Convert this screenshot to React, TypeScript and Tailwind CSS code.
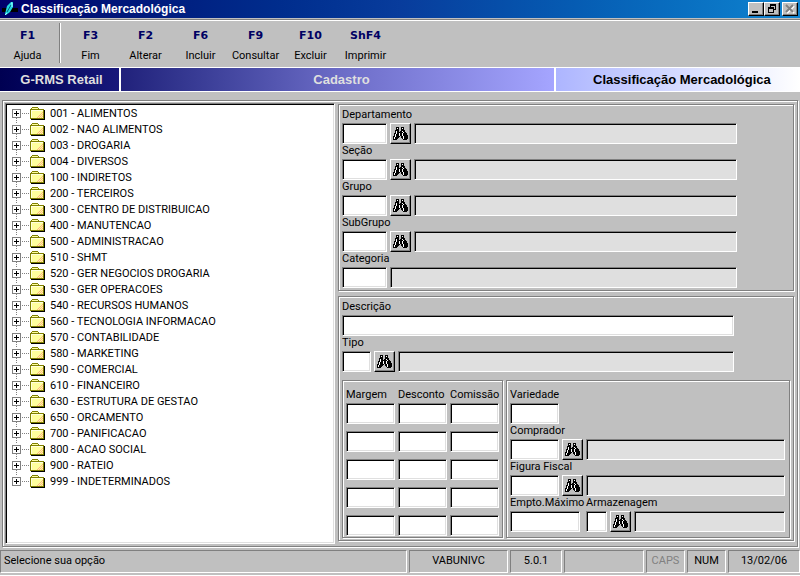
import { useId } from "react";
import type { ReactNode } from "react";
import clsx from "clsx";

const departments = [
  "001 - ALIMENTOS",
  "002 - NAO ALIMENTOS",
  "003 - DROGARIA",
  "004 - DIVERSOS",
  "100 - INDIRETOS",
  "200 - TERCEIROS",
  "300 - CENTRO DE DISTRIBUICAO",
  "400 - MANUTENCAO",
  "500 - ADMINISTRACAO",
  "510 - SHMT",
  "520 - GER NEGOCIOS DROGARIA",
  "530 - GER OPERACOES",
  "540 - RECURSOS HUMANOS",
  "560 - TECNOLOGIA INFORMACAO",
  "570 - CONTABILIDADE",
  "580 - MARKETING",
  "590 - COMERCIAL",
  "610 - FINANCEIRO",
  "630 - ESTRUTURA DE GESTAO",
  "650 - ORCAMENTO",
  "700 - PANIFICACAO",
  "800 - ACAO SOCIAL",
  "900 - RATEIO",
  "999 - INDETERMINADOS",
];

const actions = [
  { key: "F3", label: "Fim" },
  { key: "F2", label: "Alterar" },
  { key: "F6", label: "Incluir" },
  { key: "F9", label: "Consultar" },
  { key: "F10", label: "Excluir" },
  { key: "ShF4", label: "Imprimir" },
];

const etched =
  "border border-[#808080] shadow-[1px_1px_0_#fff,inset_1px_1px_0_#fff]";
const sunken =
  "border border-t-[#808080] border-l-[#808080] border-r-white border-b-white shadow-[inset_1px_1px_0_#000,inset_-1px_-1px_0_#dfdfdf]";
const raised =
  "border border-t-white border-l-white border-r-black border-b-black bg-[#c0c0c0] shadow-[inset_-1px_-1px_0_#808080]";

// # = black, o = white
const binoculars = [
  "...###..###....",
  "...#o#..#o#....",
  "...###..###....",
  "..####..####...",
  "..#o##.##o##...",
  "..#o######o##..",
  ".##o##o##o####.",
  ".#o###o##o####.",
  ".#o###o##o#####",
  "##o####.##o####",
  "#o####..##o####",
  "#o###....#o####",
  "####......####.",
];

function Pixels({ rows }: { rows: string[] }) {
  return (
    <svg
      width={rows[0].length}
      height={rows.length}
      shapeRendering="crispEdges"
      aria-hidden="true"
    >
      {rows.map((row, y) =>
        row.split("").map((c, x) =>
          c === "." ? null : (
            <rect
              key={`${x}-${y}`}
              x={x}
              y={y}
              width="1"
              height="1"
              fill={c === "#" ? "#000" : "#fff"}
            />
          )
        )
      )}
    </svg>
  );
}

function Folder() {
  return (
    <svg width="16" height="14" shapeRendering="crispEdges" aria-hidden="true">
      <path d="M1 12h13v-9h1v10h-14z" fill="#000" />
      <path d="M0 2h1v-1h1v-1h6v1h1v1h5v10h-14z" fill="#808000" />
      <path d="M1 3h12v8h-12zM2 1h6v1h-6z" fill="#ffff9c" />
      <path d="M1 3h12v1h-12zM1 3h1v8h-1z" fill="#ffffde" />
      <path
        d="M12 5h1v1h-1zM11 6h1v1h-1zM10 7h1v1h-1zM12 7h1v1h-1zM9 8h1v1h-1zM11 8h1v1h-1zM8 9h1v1h-1zM10 9h1v1h-1zM12 9h1v1h-1zM7 10h1v1h-1zM9 10h1v1h-1zM11 10h1v1h-1z"
        fill="#ffb584"
      />
    </svg>
  );
}

function Expander({ first, last }: { first: boolean; last: boolean }) {
  return (
    <svg width="18" height="16" shapeRendering="crispEdges" aria-hidden="true">
      {!first && <path d="M4 0h1v1h-1z" fill="#808080" />}
      {!last && <path d="M4 12h1v1h-1zM4 14h1v1h-1z" fill="#808080" />}
      <path
        d="M10 7h1v1h-1zM12 7h1v1h-1zM14 7h1v1h-1zM16 7h1v1h-1z"
        fill="#808080"
      />
      <rect x="0" y="3" width="9" height="9" fill="#808080" />
      <rect x="1" y="4" width="7" height="7" fill="#fff" />
      <path d="M2 7h5v1h-5zM4 5h1v5h-1z" fill="#000" />
    </svg>
  );
}

function LookupButton({ name }: { name: string }) {
  return (
    <button
      type="button"
      aria-label={`Pesquisar ${name}`}
      className={clsx(
        "flex h-[21px] w-[21px] shrink-0 items-center justify-center",
        raised
      )}
    >
      <Pixels rows={binoculars} />
    </button>
  );
}

interface FieldProps {
  label: string;
  width: string;
  lookup?: boolean;
  description?: boolean;
  className?: string;
}

function Field({ label, width, lookup, description, className }: FieldProps) {
  const id = useId();
  return (
    <div className={className}>
      <label htmlFor={id} className="block h-[15px] leading-[14px] whitespace-nowrap">
        {label}
      </label>
      <div className="flex gap-[3px]">
        <input id={id} className={clsx("h-[21px] bg-white px-1", width, sunken)} />
        {lookup && <LookupButton name={label} />}
        {description && (
          <input
            readOnly
            aria-label={`Nome ${label}`}
            className={clsx("h-[21px] min-w-0 flex-1 bg-[#dfdfdf] px-1", sunken)}
          />
        )}
      </div>
    </div>
  );
}

function StatusCell({
  children,
  className,
}: {
  children?: ReactNode;
  className: string;
}) {
  return (
    <div
      className={clsx(
        "flex h-[23px] items-center border border-t-[#808080] border-l-[#808080] border-r-white border-b-white",
        className
      )}
    >
      {children}
    </div>
  );
}

function TitleBar() {
  const button = clsx("flex h-[14px] w-4 items-center justify-center", raised);
  return (
    <header className="flex h-[18px] items-center bg-linear-to-r from-[#00006b] via-[#083c9c] to-[#1084d0] pr-[2px] pl-[2px]">
      <svg width="16" height="16" aria-hidden="true">
        <path d="M0 7h16v4h-16z" fill="#000" />
        <path d="M3 13l2-8 4-4h2v5l-3 5-4 3z" fill="#21d6de" />
        <path d="M5 11l4-7" stroke="#005a7b" fill="none" />
        <path d="M3 14l2-2M9 2h1v4" stroke="#9cffff" fill="none" />
      </svg>
      <h1 className="ml-[3px] flex-1 font-['Liberation_Sans',sans-serif] text-[12px] leading-4 font-bold text-white">
        Classificação Mercadológica
      </h1>
      <div className="flex">
        <button type="button" aria-label="Minimizar" className={button}>
          <svg width="12" height="10" shapeRendering="crispEdges">
            <rect x="2" y="7" width="6" height="2" fill="#000" />
          </svg>
        </button>
        <button type="button" aria-label="Restaurar" className={button}>
          <svg width="12" height="10" shapeRendering="crispEdges">
            <path
              d="M4 0h6v6h-2v-1h1v-3h-4v1h-1zM2 3h6v6h-6zM3 5v3h4v-3z"
              fill="#000"
              fillRule="evenodd"
            />
          </svg>
        </button>
        <button
          type="button"
          aria-label="Fechar"
          className={clsx(button, "ml-[2px]")}
        >
          <svg width="12" height="10" fill="none" strokeWidth="2">
            <path d="M3 2l7 7M10 2l-7 7" stroke="#fff" />
            <path d="M2 1l7 7M9 1l-7 7" stroke="#808080" />
          </svg>
        </button>
      </div>
    </header>
  );
}

function ToolButton({ name, label }: { name: string; label: string }) {
  return (
    <button type="button" className="flex h-10 w-[55px] flex-col items-center">
      <span className="font-['DejaVu_Sans',sans-serif] text-[11px] leading-5 font-bold text-[#000063]">
        {name}
      </span>
      <span className="leading-5">{label}</span>
    </button>
  );
}

export default function App() {
  const gridId = useId();
  return (
    <div className="flex min-h-screen flex-col bg-[#c0c0c0] font-[Roboto,sans-serif] text-[11px] text-black">
      <TitleBar />

      {/* Toolbar */}
      <nav className="mt-px flex h-12 border-t border-[#808080] shadow-[inset_0_1px_0_#fff]">
        <div className="flex pt-[6px]">
          <ToolButton name="F1" label="Ajuda" />
        </div>
        <div className="mt-[3px] mr-[2px] ml-1 h-10 w-[2px] border-r border-l border-r-white border-l-[#808080]" />
        <div className="flex pt-[6px]">
          {actions.map((a) => (
            <ToolButton key={a.key} name={a.key} label={a.label} />
          ))}
        </div>
      </nav>

      {/* Banner */}
      <div className="flex h-[25px] border-y border-white font-['Liberation_Sans',sans-serif] text-[13px] leading-6 font-bold">
        <div className="w-[121px] border-r-2 border-white bg-linear-to-r from-[#000052] to-[#18187b] pl-1 text-center leading-[23px] text-[#dfdfdf]">
          G-RMS Retail
        </div>
        <div className="flex-9 border-r-2 border-white bg-linear-to-r from-[#21217b] via-[#6b6bc6] to-[#a5a5ff] pl-2 text-center text-[#dfdfdf]">
          Cadastro
        </div>
        <div className="flex-5 bg-linear-to-r from-[#adb5ff] to-white pl-2 text-center">
          Classificação Mercadológica
        </div>
      </div>

      <main className={clsx("mx-[2px] mt-2 flex flex-1 gap-[3px] p-[2px]", etched)}>
        {/* Department tree */}
        <ul
          className={clsx(
            "w-[330px] shrink-0 bg-white pt-[2px] pl-[6px]",
            sunken
          )}
        >
          {departments.map((d, i) => (
            <li key={d} className="flex h-4 items-center">
              <button type="button" aria-label={`Expandir ${d}`}>
                <Expander first={i === 0} last={i === departments.length - 1} />
              </button>
              <Folder />
              <span className="ml-1 leading-4">{d}</span>
            </li>
          ))}
        </ul>

        <form className="mt-px flex min-w-0 flex-1 flex-col gap-[5px] pr-px">
          <section className={clsx("pt-[3px] pr-14 pb-[2px] pl-[3px]", etched)}>
            <Field label="Departamento" width="w-[45px]" lookup description />
            <Field label="Seção" width="w-[45px]" lookup description />
            <Field label="Grupo" width="w-[45px]" lookup description />
            <Field label="SubGrupo" width="w-[45px]" lookup description />
            <Field label="Categoria" width="w-[45px]" description />
          </section>

          <section className={clsx("pt-[3px] pr-[3px] pb-[2px] pl-[3px]", etched)}>
            <Field label="Descrição" width="w-full" className="pr-14" />
            <Field
              label="Tipo"
              width="w-[29px]"
              lookup
              description
              className="pr-14"
            />

            <div className="mt-2 flex gap-[3px]">
              <div
                className={clsx(
                  "grid grid-cols-[49px_49px_49px] gap-x-[3px] px-[3px] pt-[6px] pb-px",
                  etched
                )}
              >
                {["Margem", "Desconto", "Comissão"].map((name) => (
                  <div key={name} className="flex flex-col">
                    <label
                      htmlFor={`${gridId}-${name}-1`}
                      className="h-4 leading-[15px] whitespace-nowrap"
                    >
                      {name}
                    </label>
                    <div className="flex flex-col gap-[7px]">
                      {[1, 2, 3, 4, 5].map((n) => (
                        <input
                          key={n}
                          id={`${gridId}-${name}-${n}`}
                          aria-label={`${name} ${n}`}
                          className={clsx("h-[21px] w-full bg-white px-1", sunken)}
                        />
                      ))}
                    </div>
                  </div>
                ))}
              </div>

              <div className={clsx("min-w-0 flex-1 pt-[7px] pr-1 pl-[3px]", etched)}>
                <Field label="Variedade" width="w-[49px]" />
                <Field label="Comprador" width="w-[49px]" lookup description />
                <Field label="Figura Fiscal" width="w-[49px]" lookup description />
                <div className="flex gap-[6px]">
                  <Field
                    label="Empto.Máximo"
                    width="w-[70px]"
                    className="w-[70px]"
                  />
                  <Field
                    label="Armazenagem"
                    width="w-[21px]"
                    lookup
                    description
                    className="min-w-0 flex-1"
                  />
                </div>
              </div>
            </div>
          </section>
        </form>
      </main>

      {/* Status bar */}
      <footer className="mt-[2px] flex gap-[2px] border-b border-white pt-px pb-[2px]">
        <StatusCell className="flex-1 pl-[3px]">Selecione sua opção</StatusCell>
        <StatusCell className="w-[99px] justify-center">VABUNIVC</StatusCell>
        <StatusCell className="w-[52px] justify-center">5.0.1</StatusCell>
        <StatusCell className="w-20" />
        <StatusCell className="w-[39px] justify-center text-[#808080]">
          CAPS
        </StatusCell>
        <StatusCell className="w-[39px] justify-center">NUM</StatusCell>
        <StatusCell className="w-[72px] justify-center">13/02/06</StatusCell>
      </footer>
    </div>
  );
}
